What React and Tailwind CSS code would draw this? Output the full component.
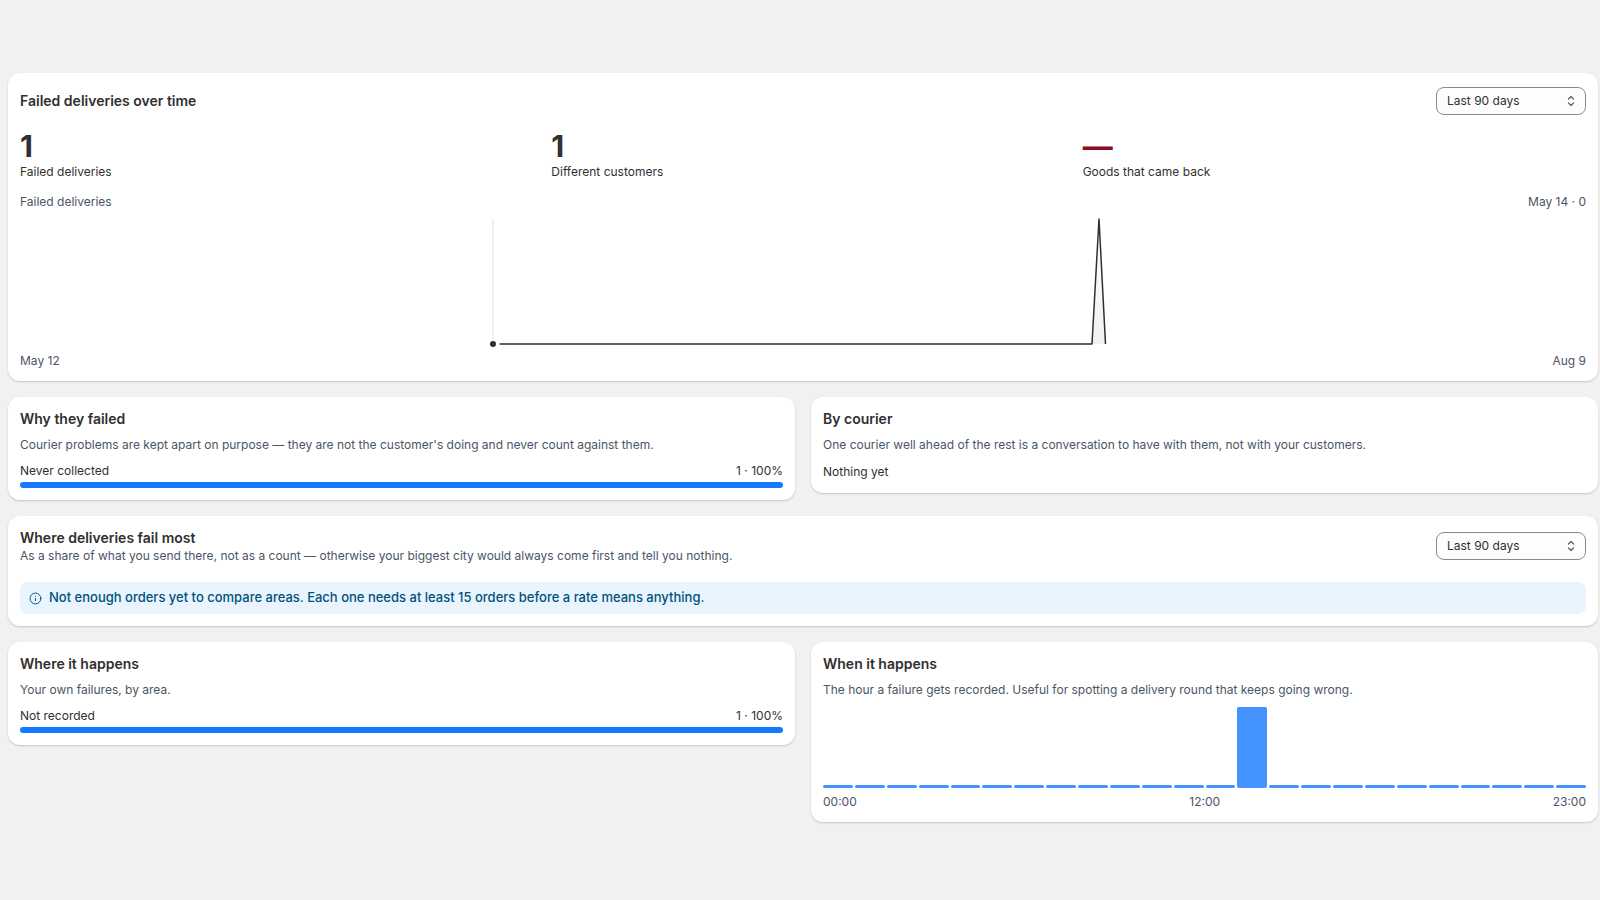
import { Info } from 'lucide-react'

const hours = Array.from({ length: 24 }, (_, i) => i)

function RangeSelect() {
  return (
    <button className="flex h-[28px] w-[150px] shrink-0 items-center justify-between rounded-lg border border-[#8a8a8a] bg-[#fdfdfd] pl-[10px] pr-[6px] text-xs text-[#303030]">
      <span>Last 90 days</span>
      <svg width="16" height="16" viewBox="0 0 16 16" fill="none" stroke="#5c5c5c" strokeWidth="1.2" strokeLinecap="round" strokeLinejoin="round">
        <path d="M5.5 6 8 3.5 10.5 6" />
        <path d="M5.5 10 8 12.5 10.5 10" />
      </svg>
    </button>
  )
}

function Card({ className = '', children }) {
  return (
    <div className={`rounded-xl bg-white p-3 shadow-[0_1px_2px_rgba(26,26,26,0.2)] ${className}`}>
      {children}
    </div>
  )
}

function Stat({ value, label, dash }) {
  return (
    <div>
      <div className={`h-[36px] text-[30px] font-bold leading-[36px] ${dash ? 'text-[#8e0b21]' : 'text-[#303030]'}`}>{value}</div>
      <div className="text-xs leading-4 text-[#303030]">{label}</div>
    </div>
  )
}

function BarRow({ label, value }) {
  return (
    <div className="mt-[10px]">
      <div className="flex justify-between text-xs leading-4 text-[#303030]">
        <span>{label}</span>
        <span>{value}</span>
      </div>
      <div className="mt-[3px] h-[6px] rounded-full bg-[#1677ff]" />
    </div>
  )
}

function Trend() {
  return (
    <svg className="block w-full" height="143" viewBox="0 0 1566 143" fill="none">
      <defs>
        <linearGradient id="spike" x1="0" y1="0" x2="0" y2="1">
          <stop offset="0" stopColor="#303030" stopOpacity="0" />
          <stop offset="1" stopColor="#303030" stopOpacity="0.07" />
        </linearGradient>
      </defs>
      <path d="M473 9V134" stroke="#e3e3e3" strokeWidth="1" />
      <path d="M1072 134 1079 9 1085.5 134Z" fill="url(#spike)" />
      <path d="M479.5 134H1072L1079 9 1085.5 134" stroke="#303030" strokeWidth="1.5" strokeLinejoin="round" />
      <circle cx="473" cy="134" r="3" fill="#303030" />
    </svg>
  )
}

export default function App() {
  return (
    <div className="min-h-screen bg-[#f1f1f1] pb-[80px] pl-2 pr-[2px] pt-[73px] font-['Inter',sans-serif]">
      <div className="flex flex-col gap-4">
        <Card>
          <div className="flex items-center justify-between pt-[2px]">
            <h2 className="text-sm font-semibold leading-5 text-[#303030]">Failed deliveries over time</h2>
            <RangeSelect />
          </div>
          <div className="mt-[13px] grid grid-cols-3 gap-[28px]">
            <Stat value="1" label="Failed deliveries" />
            <Stat value="1" label="Different customers" />
            <Stat value="—" label="Goods that came back" dash />
          </div>
          <div className="mt-[14px] flex justify-between text-xs leading-4 text-[#4a5568]">
            <span>Failed deliveries</span>
            <span>May 14 · 0</span>
          </div>
          <Trend />
          <div className="flex justify-between text-xs leading-4 text-[#4a5568]">
            <span>May 12</span>
            <span>Aug 9</span>
          </div>
        </Card>

        <div className="grid grid-cols-2 items-start gap-4">
          <Card>
            <h2 className="text-sm font-semibold leading-5 text-[#303030]">Why they failed</h2>
            <p className="mt-2 text-xs leading-4 text-[#4a5568]">Courier problems are kept apart on purpose — they are not the customer's doing and never count against them.</p>
            <BarRow label="Never collected" value="1 · 100%" />
          </Card>
          <Card>
            <h2 className="text-sm font-semibold leading-5 text-[#303030]">By courier</h2>
            <p className="mt-2 text-xs leading-4 text-[#4a5568]">One courier well ahead of the rest is a conversation to have with them, not with your customers.</p>
            <p className="mt-[10px] text-xs leading-[18px] text-[#303030]">Nothing yet</p>
          </Card>
        </div>

        <Card>
          <div className="flex items-center justify-between">
            <div>
              <h2 className="text-sm font-semibold leading-5 text-[#303030]">Where deliveries fail most</h2>
              <p className="text-xs leading-4 text-[#4a5568]">As a share of what you send there, not as a count — otherwise your biggest city would always come first and tell you nothing.</p>
            </div>
            <RangeSelect />
          </div>
          <div className="mt-[18px] flex h-[32px] items-center gap-[7px] rounded-lg bg-[#eaf4ff] pl-[9px] text-[13px] font-medium text-[#00527c]">
            <Info size={13} strokeWidth={1.8} />
            <span>Not enough orders yet to compare areas. Each one needs at least 15 orders before a rate means anything.</span>
          </div>
        </Card>

        <div className="grid grid-cols-2 items-start gap-4">
          <Card>
            <h2 className="text-sm font-semibold leading-5 text-[#303030]">Where it happens</h2>
            <p className="mt-2 text-xs leading-4 text-[#4a5568]">Your own failures, by area.</p>
            <BarRow label="Not recorded" value="1 · 100%" />
          </Card>
          <Card>
            <h2 className="text-sm font-semibold leading-5 text-[#303030]">When it happens</h2>
            <p className="mt-2 text-xs leading-4 text-[#4a5568]">The hour a failure gets recorded. Useful for spotting a delivery round that keeps going wrong.</p>
            <div className="mt-[9px] flex h-[81px] items-end gap-[2px]">
              {hours.map((h) => (
                <div key={h} className={`flex-1 rounded-[2px] bg-[#4492ff] ${h === 13 ? 'h-[81px]' : 'h-[3px]'}`} />
              ))}
            </div>
            <div className="mt-[6px] flex justify-between text-xs leading-4 text-[#4a5568]">
              <span>00:00</span>
              <span>12:00</span>
              <span>23:00</span>
            </div>
          </Card>
        </div>
      </div>
    </div>
  )
}
